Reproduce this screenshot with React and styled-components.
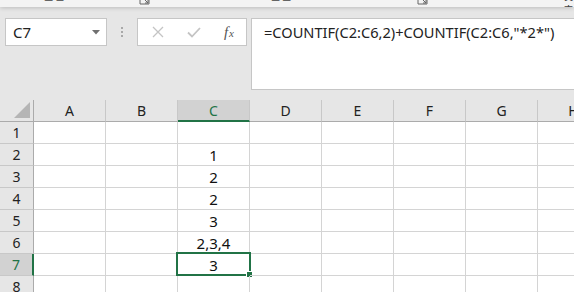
import React from "react";
import styled, { createGlobalStyle } from "styled-components";

const GREEN = "#217346";
const columns = ["A", "B", "C", "D", "E", "F", "G", "H"];
const rows = [
  { n: 1, c: "" },
  { n: 2, c: "1" },
  { n: 3, c: "2" },
  { n: 4, c: "2" },
  { n: 5, c: "3" },
  { n: 6, c: "2,3,4" },
  { n: 7, c: "3" },
  { n: 8, c: "" },
];

const GlobalStyle = createGlobalStyle`
  html, body {
    margin: 0;
    padding: 0;
    background: #e6e6e6;
    overflow: hidden;
  }
  body {
    font-family: "Noto Sans", "Noto Sans CJK KR", sans-serif;
    color: #222;
  }
`;

const Launcher = () => (
  <svg width="11" height="11" viewBox="0 0 11 11">
    <path d="M1 1h9v9H1z" fill="none" stroke="#666" strokeWidth="1" />
    <path d="M4 4l5 5M9 6v3H6" fill="none" stroke="#666" strokeWidth="1" />
  </svg>
);

const App = () => {
  return (
    <Page>
      <GlobalStyle />
      <Ribbon>
        <GroupLabel left={43}>클립보드</GroupLabel>
        <LauncherBox left={139}><Launcher /></LauncherBox>
        <GroupLabel left={270}>글꼴</GroupLabel>
        <LauncherBox left={417}><Launcher /></LauncherBox>
        <GroupLabel left={563}>맞춤</GroupLabel>
      </Ribbon>
      <FormulaBar>
        <NameBox>
          <span>C7</span>
          <svg width="8" height="5" viewBox="0 0 8 5">
            <path d="M0 0h8L4 4.5z" fill="#707070" />
          </svg>
        </NameBox>
        <Grip>
          <i /><i /><i />
        </Grip>
        <ButtonBox>
          <svg width="12" height="12" viewBox="0 0 12 12">
            <path d="M1 1l10 10M11 1L1 11" stroke="#c4c4c4" strokeWidth="1.3" />
          </svg>
          <svg width="14" height="11" viewBox="0 0 14 11">
            <path d="M1 5.5l4 4L13 1" fill="none" stroke="#c4c4c4" strokeWidth="1.8" />
          </svg>
          <Fx>
            f<sub>x</sub>
          </Fx>
        </ButtonBox>
        <FormulaInput>=COUNTIF(C2:C6,2)+COUNTIF(C2:C6,"*2*")</FormulaInput>
      </FormulaBar>
      <Sheet>
        <Corner>
          <svg width="16" height="16" viewBox="0 0 16 16">
            <path d="M16 0v16H0z" fill="#b5b5b5" />
          </svg>
        </Corner>
        {columns.map((col) => (
          <ColHeader key={col} selected={col === "C"}>
            {col}
          </ColHeader>
        ))}
        {rows.map((r) => (
          <React.Fragment key={r.n}>
            <RowHeader selected={r.n === 7}>{r.n}</RowHeader>
            {columns.map((col) => (
              <Cell key={col}>
                {col === "C" ? r.c : ""}
                {col === "C" && r.n === 7 && (
                  <Selection>
                    <Handle />
                  </Selection>
                )}
              </Cell>
            ))}
          </React.Fragment>
        ))}
      </Sheet>
    </Page>
  );
};

const Page = styled.div`
  width: 574px;
  height: 292px;
  overflow: hidden;
  background: #e6e6e6;
`;

const Ribbon = styled.div`
  position: relative;
  height: 7px;
  background: #f3f3f3;
  overflow: hidden;
  box-shadow: 0 1px 4px rgba(0, 0, 0, 0.18);
  z-index: 1;
`;

const GroupLabel = styled.span`
  position: absolute;
  left: ${(p) => p.left}px;
  top: -12px;
  font-size: 12px;
  line-height: 16px;
  color: #444;
`;

const LauncherBox = styled.span`
  position: absolute;
  left: ${(p) => p.left}px;
  top: -6px;
  line-height: 0;
`;

const FormulaBar = styled.div`
  display: flex;
  align-items: flex-start;
  padding: 11px 0 0 5px;
  height: 82px;
  box-sizing: border-box;

  & > * {
    flex: none;
  }
`;

const NameBox = styled.div`
  width: 102px;
  height: 28px;
  box-sizing: border-box;
  border: 1px solid #c6c6c6;
  background: #fff;
  display: flex;
  align-items: center;
  justify-content: space-between;
  padding: 0 6px 0 7px;
  font-size: 15px;
  color: #222;
`;

const Grip = styled.div`
  width: 30px;
  height: 28px;
  display: flex;
  flex-direction: column;
  align-items: center;
  justify-content: center;
  gap: 2px;

  i {
    display: block;
    width: 2px;
    height: 2px;
    background: #a8a8a8;
  }
`;

const ButtonBox = styled.div`
  width: 110px;
  height: 28px;
  box-sizing: border-box;
  border: 1px solid #c6c6c6;
  background: #fff;
  display: flex;
  align-items: center;
  justify-content: space-between;
  padding: 0 12px 0 14px;
`;

const Fx = styled.span`
  font-family: "Liberation Serif", serif;
  font-style: italic;
  font-size: 15px;
  color: #555;
  line-height: 1;

  sub {
    font-size: 11px;
    vertical-align: baseline;
    margin-left: 1px;
  }
`;

const FormulaInput = styled.div`
  margin-left: 4px;
  width: 340px;
  height: 72px;
  box-sizing: border-box;
  border: 1px solid #c6c6c6;
  background: #fff;
  padding: 2px 0 0 12px;
  font-size: 14.6px;
  line-height: 22px;
  color: #222;
  white-space: nowrap;
`;

const Sheet = styled.div`
  margin-top: 11px;
  display: grid;
  grid-template-columns: 34px repeat(8, 72px);
  grid-auto-rows: 22px;
  width: 610px;
  background: #fff;
`;

const Corner = styled.div`
  background: #e6e6e6;
  border-right: 1px solid #ababab;
  border-bottom: 1px solid #ababab;
  display: flex;
  align-items: flex-end;
  justify-content: flex-end;
  padding: 0 3px 3px 0;
`;

const ColHeader = styled.div`
  background: ${(p) => (p.selected ? "#d2d2d2" : "#e6e6e6")};
  border-right: 1px solid #c8c8c8;
  border-bottom: ${(p) => (p.selected ? `2px solid ${GREEN}` : "1px solid #ababab")};
  color: ${(p) => (p.selected ? GREEN : "#222")};
  font-size: 14px;
  display: flex;
  align-items: center;
  justify-content: center;
  padding-top: ${(p) => (p.selected ? "1px" : "0")};
`;

const RowHeader = styled.div`
  background: ${(p) => (p.selected ? "#d2d2d2" : "#e6e6e6")};
  border-right: ${(p) => (p.selected ? `2px solid ${GREEN}` : "1px solid #ababab")};
  border-bottom: 1px solid #c8c8c8;
  color: ${(p) => (p.selected ? GREEN : "#222")};
  font-size: 14px;
  display: flex;
  align-items: center;
  justify-content: center;
`;

const Cell = styled.div`
  position: relative;
  border-right: 1px solid #d4d4d4;
  border-bottom: 1px solid #d4d4d4;
  font-size: 15px;
  color: #111;
  display: flex;
  align-items: center;
  justify-content: center;
`;

const Selection = styled.div`
  position: absolute;
  top: -2px;
  left: -2px;
  right: -2px;
  bottom: -1px;
  border: 2px solid ${GREEN};
`;

const Handle = styled.div`
  position: absolute;
  right: -4px;
  bottom: -4px;
  width: 5px;
  height: 5px;
  background: ${GREEN};
  border: 1px solid #fff;
`;

export default App;
